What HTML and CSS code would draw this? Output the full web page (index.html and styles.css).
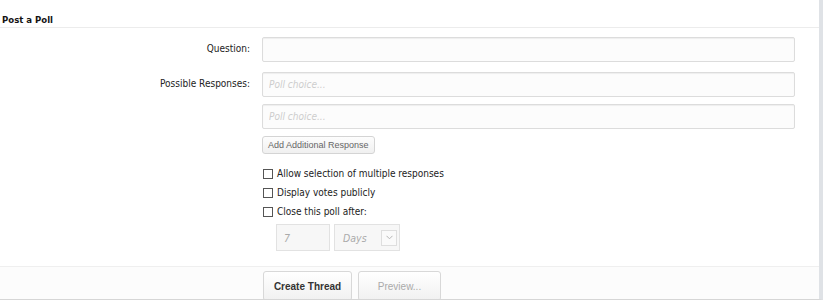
FILE: index.html
```html
<!DOCTYPE html>
<html lang="en">
<head>
  <meta charset="UTF-8" />
  <title>Post a Poll</title>
  <link rel="stylesheet" href="styles.css">
</head>
<body>
  <div class="panel">
    <h3 class="panel-title">Post a Poll</h3>

    <div class="form">
      <div class="row">
        <label class="label">Question:</label>
        <div class="field">
          <input type="text" class="text-input" />
        </div>
      </div>

      <div class="row">
        <label class="label">Possible Responses:</label>
        <div class="field stack">
          <input type="text" class="text-input" placeholder="Poll choice..." />
          <input type="text" class="text-input" placeholder="Poll choice..." />
          <button class="small-btn">Add Additional Response</button>
        </div>
      </div>

      <div class="row">
        <div class="label"></div>
        <div class="field checks">
          <label class="check"><span class="box"></span>Allow selection of multiple responses</label>
          <label class="check"><span class="box"></span>Display votes publicly</label>
          <label class="check"><span class="box"></span>Close this poll after:</label>
          <div class="close-after">
            <div class="num-input">7</div>
            <div class="select">
              <span>Days</span>
              <span class="arrow">
                <svg width="7" height="5" viewBox="0 0 7 5"><path d="M0.5 0.8 L3.5 3.8 L6.5 0.8" fill="none" stroke="#b5b5b5" stroke-width="1"/></svg>
              </span>
            </div>
          </div>
        </div>
      </div>
    </div>

    <div class="submit-row">
      <button class="btn primary">Create Thread</button>
      <button class="btn">Preview...</button>
    </div>
  </div>
</body>
</html>
```

FILE: styles.css
```css
* {margin: 0; padding: 0; box-sizing: border-box;}
body {
  background: #fff;
  font-family: "DejaVu Sans Condensed", "DejaVu Sans", sans-serif;
  font-size: 10px;
  color: #141414;
}
.panel {
  width: 823px;
  height: 300px;
  border-right: 4px solid #dfe2e6;
  border-bottom: 1px solid #d6d6d6;
  overflow: hidden;
}
.panel-title {
  height: 28px;
  padding: 14px 0 0 2px;
  font-size: 9.5px;
  font-weight: bold;
  border-bottom: 1px solid #ececec;
}
.form {
  padding-top: 9px;
  height: 238px;
}
.row {
  display: flex;
  margin-bottom: 10px;
}
.label {
  width: 250px;
  text-align: right;
  padding-top: 6px;
  color: #222;
}
.field {
  margin-left: 12px;
  width: 533px;
}
.stack {
  display: flex;
  flex-direction: column;
  gap: 7px;
  align-items: flex-start;
}
.text-input {
  display: block;
  width: 533px;
  height: 25px;
  border: 1px solid #dcdcdc;
  border-radius: 2px;
  background: #fcfcfc;
  box-shadow: inset 0 1px 1px #eee;
  padding: 0 6px;
  font-family: inherit;
  font-size: 10px;
}
.text-input::placeholder {
  color: #cdcdcd;
  font-style: italic;
}
.small-btn {
  height: 18px;
  padding: 0 5px;
  border: 1px solid #d4d4d4;
  border-radius: 3px;
  background: linear-gradient(#fdfdfd, #f0f0f0);
  font-family: "Liberation Sans", sans-serif;
  font-size: 9px;
  color: #666;
}
.checks {
  margin-top: 0;
  margin-left: 13px;
}
.check {
  display: flex;
  align-items: center;
  height: 19px;
  color: #222;
}
.box {
  width: 10px;
  height: 10px;
  border: 1px solid #555;
  margin-right: 4px;
  background: #fff;
}
.close-after {
  display: flex;
  gap: 4px;
  margin: 3px 0 0 13px;
}
.num-input, .select {
  height: 27px;
  border: 1px solid #e2e2e2;
  background: #f7f7f7;
  color: #aaa;
  font-style: italic;
  font-size: 10.5px;
  display: flex;
  align-items: center;
}
.num-input {
  width: 54px;
  padding-left: 7px;
}
.select {
  width: 66px;
  padding-left: 8px;
  justify-content: space-between;
}
.arrow {
  width: 16px;
  height: 16px;
  margin-right: 2px;
  border: 1px solid #dedede;
  background: #fafafa;
  display: flex;
  align-items: center;
  justify-content: center;
}
.submit-row {
  border-top: 1px solid #efefef;
  background: #fcfcfc;
  padding: 4px 0 0 263px;
  display: flex;
  gap: 6px;
  height: 34px;
}
.btn {
  height: 30px;
  border: 1px solid #d8d8d8;
  border-radius: 3px;
  background: linear-gradient(#fff, #f1f1f1);
  font-family: "Liberation Sans", sans-serif;
  font-size: 10px;
  color: #aaa;
}
.btn.primary {
  width: 89px;
  font-weight: bold;
  color: #333;
}
.btn:not(.primary) {
  width: 83px;
}
```
